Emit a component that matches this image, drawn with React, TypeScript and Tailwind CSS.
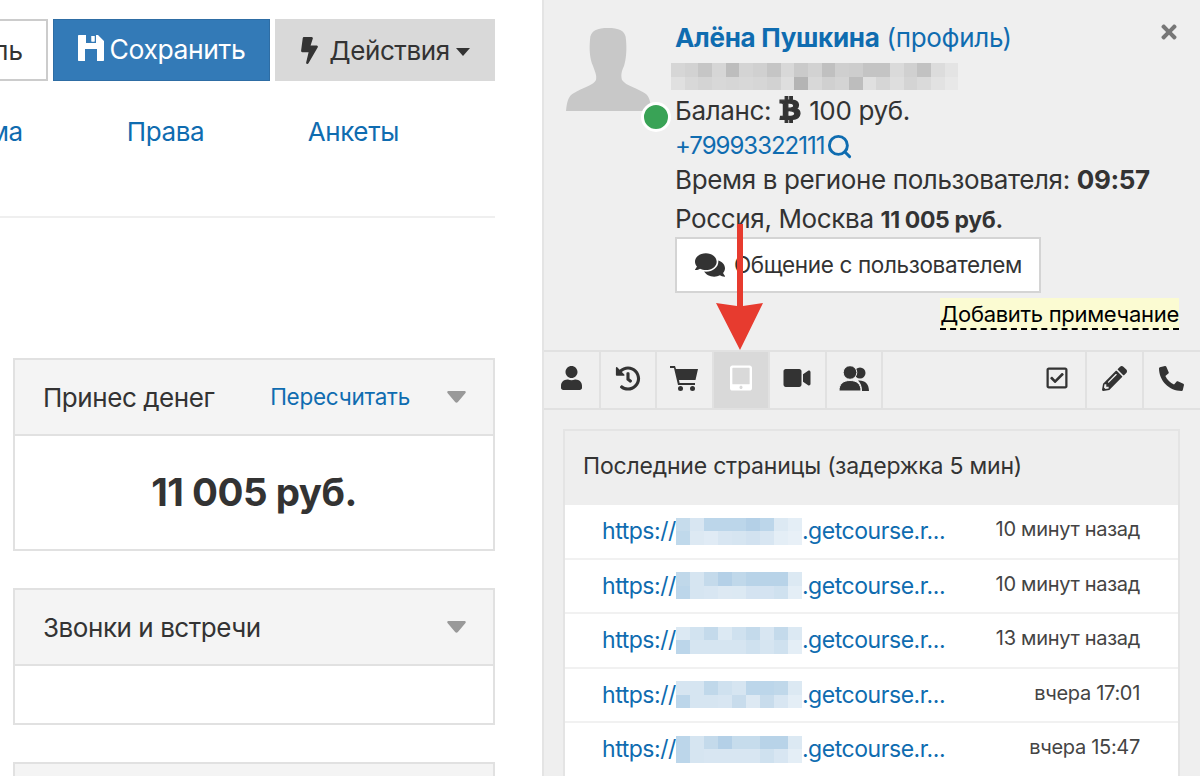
import React from "react";
import {
  FaBolt, FaBtc, FaComments, FaUser, FaHistory,
  FaTabletAlt, FaVideo, FaPencilAlt, FaPhone, FaRegCheckSquare, FaTimes,
} from "react-icons/fa";
import { Search } from "lucide-react";

const FONT = "font-['Inter','Noto_Sans',sans-serif]";

function Mosaic({ rows, cell }: { rows: string[][]; cell: number }) {
  return (
    <div className="flex flex-col shrink-0">
      {rows.map((r, i) => (
        <div key={i} className="flex">
          {r.map((c, j) => (
            <div key={j} style={{ background: c, width: cell, height: 13.5 }} />
          ))}
        </div>
      ))}
    </div>
  );
}

const grayRows = [
  ["#d6d6d6","#d2d2d2","#c6c6c6","#d6d6d6","#bdbdbd","#d4d4d4","#d0d0d0","#c5c5c5","#d8d8d8","#cacaca","#d2d2d2","#c0c0c0","#cfcfcf","#cdcdcd","#c4c4c4","#c4c4c4","#dadada","#d0d0d0","#c2c2c2","#dcdcdc","#e4e4e4"],
  ["#e0e0e0","#d8d8d8","#d4d4d4","#d8d8d8","#d6d6d6","#d8d8d8","#d6d6d6","#d2d2d2","#dedede","#b4b4b4","#d8d8d8","#d0d0d0","#d4d4d4","#bdbdbd","#e0e0e0","#d6d6d6","#dedede","#d4d4d4","#dadada","#e2e2e2","#e8e8e8"],
];

const blue = [
  [
    ["#c6dcec","#d8e6f2","#bcd6ea","#bcd6ea","#bcd6ea","#b4d0e7","#bcd6ea","#dce9f3","#e4eef6"],
    ["#c0d9eb","#dde9f3","#e0ebf5","#d8e6f2","#d6e5f1","#d2e2f0","#d8e6f2","#e4eef6","#e8f0f7"],
  ],
  [
    ["#c0d8ea","#d6e5f1","#c4daeb","#b4d0e7","#c0d8ea","#b8d3e8","#b8d3e8","#b8d3e8","#dce9f3"],
    ["#bcd6ea","#d6e5f1","#d8e6f2","#dde9f3","#dce9f3","#d4e3f1","#d4e3f1","#cfe1ef","#e4eef6"],
  ],
  [
    ["#dce9f3","#d2e3f0","#c4daeb","#dce9f3","#cfe1ef","#c4daeb","#d8e6f2","#c4daeb","#dce9f3"],
    ["#bcd6ea","#d6e5f1","#d6e5f1","#d6e5f1","#d6e5f1","#cfe1ef","#d6e5f1","#cfe1ef","#e4eef6"],
  ],
  [
    ["#d6e5f1","#d6e5f1","#c0d8ea","#cfe1ef","#d6e5f1","#bcd6ea","#bcd6ea","#c0d8ea","#dce9f3"],
    ["#bcd6ea","#d6e5f1","#d6e5f1","#d8e6f2","#c8dcec","#dde9f3","#c8dcec","#d8e6f2","#e4eef6"],
  ],
  [
    ["#bcd6ea","#d6e5f1","#c4daeb","#b4d0e7","#c6dcec","#c6dcec","#b8d3e8","#b8d3e8","#dce9f3"],
    ["#bcd6ea","#d6e5f1","#d8e6f2","#d8e6f2","#d8e6f2","#d8e6f2","#cfe1ef","#d8e6f2","#e4eef6"],
  ],
];

const pages = [
  { t: "10 минут назад", b: blue[0] },
  { t: "10 минут назад", b: blue[1] },
  { t: "13 минут назад", b: blue[2] },
  { t: "вчера 17:01", b: blue[3] },
  { t: "вчера 15:47", b: blue[4] },
];

function Caret() {
  return (
    <svg className="shrink-0" width="19" height="12" viewBox="0 0 20 13" fill="#999">
      <path d="M1.5 0 H18.5 C20 0 20.5 1.5 19.5 2.5 L11.5 12 C10.5 13 9.5 13 8.5 12 L0.5 2.5 C-0.5 1.5 0 0 1.5 0 Z" />
    </svg>
  );
}

function Card({ title, link, h, children }: { title: string; link?: string; h: string; children?: React.ReactNode }) {
  return (
    <div className={`border-2 border-[#e1e1e1] bg-white ${h} flex flex-col shrink-0`}>
      <div className="h-[76px] bg-[#f4f4f4] border-b-2 border-[#e1e1e1] flex items-center pl-[28px] pr-[27px] text-[26px] text-[#333] shrink-0">
        <span className="tracking-[-0.45px]">{title}</span>
        <span className="ml-auto text-[22.5px] text-[#0f6cb0] tracking-[-0.25px]">{link}</span>
        <span className="ml-[37px] flex"><Caret /></span>
      </div>
      {children}
    </div>
  );
}

function Tab({ children, active, last }: { children: React.ReactNode; active?: boolean; last?: boolean }) {
  return (
    <div className={`w-[56.5px] h-full flex items-center justify-center shrink-0 ${active ? "bg-[#d9d9d9] text-white" : "text-[#333]"} ${last ? "" : "border-r-2 border-[#e1e1e1]"}`}>
      {children}
    </div>
  );
}

export default function App() {
  return (
    <div className={`${FONT} relative w-[1200px] h-[776px] overflow-hidden bg-white flex text-[#333]`}>
      {/* left */}
      <div className="w-[495px] shrink-0 flex flex-col">
        <div className="flex justify-end gap-[5px] pt-[19px] h-[81px] shrink-0">
          <div className="w-[120px] h-[62px] bg-white border-2 border-[#ccc] flex items-center justify-end pr-[23px] text-[26px] shrink-0 overflow-hidden">
            <span>ль</span>
          </div>
          <div className="w-[217px] h-[62px] bg-[#337ab7] border border-[#2e6da4] text-white flex items-center justify-center gap-[6px] text-[26.5px] tracking-[-0.4px] shrink-0">
            <svg className="mb-[5px] shrink-0" width="26" height="26" viewBox="0 0 26 26" fill="white" fillRule="evenodd">
              <path d="M1 0 H8 V8 H18 V0 H20 L26 6 V25 C26 25.6 25.6 26 25 26 H19 V14 H7 V26 H1 C0.4 26 0 25.6 0 25 V1 C0 0.4 0.4 0 1 0 Z M13.5 1 H16.5 V6.5 H13.5 Z" />
              <path d="M13.5 1 H16.5 V6.5 H13.5 Z" />
            </svg>
            <span>Сохранить</span>
          </div>
          <div className="w-[220px] h-[62px] bg-[#d9d9d9] flex items-center justify-center gap-[10px] text-[26px] tracking-[-0.4px] shrink-0">
            <FaBolt className="w-[19px] h-[27px]" />
            <span>Действия</span>
            <svg className="-ml-[4px] mt-[3px]" width="14" height="8" viewBox="0 0 14 8" fill="#333"><path d="M0 0 H14 L7 8 Z" /></svg>
          </div>
        </div>
        <div className="h-[137px] shrink-0 border-b-2 border-[#efefef] flex justify-end pr-[96px] gap-[104px] pt-[31px] text-[26px] text-[#0f6cb0] tracking-[-0.4px]">
          <span className="w-[0px] flex justify-end"><span>ма</span></span>
          <span className="w-[77px]">Права</span>
          <span>Анкеты</span>
        </div>
        <div className="pl-[13px] pt-[140px] flex flex-col gap-[37px]">
          <Card title="Принес денег" link="Пересчитать" h="h-[193px]">
            <div className="flex-1 flex items-center justify-center font-bold text-[38.5px] text-[#333] tracking-[-0.5px]">11 005 руб.</div>
          </Card>
          <Card title="Звонки и встречи" h="h-[137px]" />
          <Card title="" h="h-[137px]" />
        </div>
      </div>

      {/* right */}
      <div className="ml-[47px] w-[658px] shrink-0 bg-[#efefef] border-l-2 border-[#e4e4e4] flex flex-col">
        <div className="h-[350px] relative flex shrink-0">
          <div className="w-[131px] shrink-0 pt-[28px] pl-[22px]">
            <svg width="86" height="83" viewBox="0 0 86 83" fill="#c8c8c8">
              <path d="M24 12 C24 2 32 0 42 0 C52 0 60 2 60 12 C61 22 60 32 58 38 C55 44 55 48 56 52 C60 58 72 60 80 66 C84 70 85 76 85 83 L0 83 C1 74 2 68 8 65 C16 60 28 57 30 52 C31 47 29 44 27 38 C24 32 23 22 24 12 Z" />
            </svg>
          </div>
          <div className="absolute left-[97px] top-[102px] w-[30px] h-[30px] rounded-full bg-[#39a356] border-[3px] border-white" />
          <div className="flex flex-col flex-1 text-[26px] tracking-[-0.36px]">
            <div className="h-[36px] mt-[20px] leading-[36px] text-[#0f6cb0] tracking-[-0.3px]"><b className="font-bold">Алёна Пушкина</b> (профиль)</div>
            <div className="-ml-[4px] mt-[7px]"><Mosaic rows={grayRows} cell={13.7} /></div>
            <div className="h-[38px] mt-[1px] flex items-center gap-[7px]">
              <span>Баланс:</span>
              <FaBtc className="w-[24px] h-[27px] stroke-[24px] mb-[2px]" />
              <span>100 руб.</span>
            </div>
            <div className="h-[32px] mt-[1px] flex items-center text-[#0f6cb0] text-[24px] tracking-[-1px]">
              <span>+79993322111</span>
              <Search className="w-[27px] h-[27px] ml-[1px]" strokeWidth={2.6} />
            </div>
            <div className="h-[38px] -mt-[2px] flex items-center">
              <span>Время в регионе пользователя: <b className="font-bold">09:57</b></span>
            </div>
            <div className="h-[38px] mt-[1px] flex items-center">
              <span>Россия, Москва <b className="font-bold text-[23px]">11 005 руб.</b></span>
            </div>
            <div className="w-[366px] h-[56px] bg-white border-2 border-[#d4d4d4] flex items-center pl-[18px] gap-[9px] text-[22.5px]">
              <FaComments className="w-[30px] h-[30px]" />
              <span>Общение с пользователем</span>
            </div>
            <div className="self-end mr-[21px] mt-[5px] h-[32px] bg-[#fbfbd2] border-b-2 border-dashed border-black text-black text-[22px] leading-[32px] tracking-[-0.3px]">Добавить примечание</div>
          </div>
          <FaTimes className="absolute right-[20px] top-[21px] w-[22px] h-[22px] text-[#777]" />
        </div>

        <div className="h-[60px] border-y-2 border-[#e1e1e1] flex items-stretch shrink-0">
          <Tab><FaUser className="w-[23px] h-[24px] -mt-[4px]" /></Tab>
          <Tab><FaHistory className="w-[26px] h-[25px] -mt-[4px]" /></Tab>
          <Tab>
            <svg className="-mt-[4px]" width="28" height="26" viewBox="0 0 28 26" fill="#333">
              <path d="M0 1 H5 L6 4 H28 L25.5 15 H9 L9.6 18 H25 V20 H8 L4 3 H0 Z" />
              <circle cx="10.5" cy="23.5" r="2.5" />
              <circle cx="22.5" cy="23.5" r="2.5" />
            </svg>
          </Tab>
          <Tab active><FaTabletAlt className="w-[22px] h-[30px] -mt-[4px]" /></Tab>
          <Tab><FaVideo className="w-[28px] h-[24px] -mt-[4px]" /></Tab>
          <Tab>
            <svg className="-mt-[4px]" width="30" height="25" viewBox="0 0 30 25" fill="#333" stroke="#efefef">
              <circle cx="21" cy="7" r="5.5" strokeWidth="0" />
              <path d="M19 14.5 C26 14 30 18 30 25 H23 C23 20 21.5 17 19 14.5 Z" strokeWidth="0" />
              <circle cx="11" cy="6.5" r="6.8" strokeWidth="1" />
              <path d="M0 25 C0 18 4 14.5 11 14.5 C18 14.5 22 18 22 25 Z" strokeWidth="1" />
            </svg>
          </Tab>
          <div className="flex-1" />
          <Tab><FaRegCheckSquare className="w-[22px] h-[24px] -mt-[4px] -ml-[1px]" /></Tab>
          <Tab><FaPencilAlt className="w-[25px] h-[25px] -mt-[4px]" /></Tab>
          <Tab last><FaPhone className="w-[25px] h-[25px] scale-x-[-1] -mt-[4px]" /></Tab>
        </div>

        <div className="pl-[19px] pr-[20px] pt-[19px]">
          <div className="border-2 border-[#e4e4e4] bg-white">
            <div className="h-[74px] bg-[#eeeeee] flex items-center pl-[18px] text-[23px] tracking-[-0.2px]">
              <span className="-mt-[3px]">Последние страницы (задержка 5 мин)</span>
            </div>
            {pages.map((p, i) => (
              <div key={i} className="h-[54.5px] border-b-2 border-[#f1f1f1] flex items-center pl-[37px] pr-[38px]">
                <div className="flex items-center text-[#0f6cb0] text-[23px] tracking-[-0.45px]">
                  <span>https://</span>
                  <Mosaic rows={p.b} cell={14} />
                  <span>.getcourse.r...</span>
                </div>
                <span className="ml-auto text-[20px] text-[#444] -mt-[4px] tracking-[-0.3px]">{p.t}</span>
              </div>
            ))}
          </div>
        </div>
      </div>

      {/* annotation arrow */}
      <svg className="absolute left-[710px] top-[222px]" width="60" height="130" viewBox="0 0 60 130" fill="#e73b2f">
        <path d="M27 2 H33 V84 L53 81 L30 128 L6 81 L27 84 Z" />
      </svg>
    </div>
  );
}
